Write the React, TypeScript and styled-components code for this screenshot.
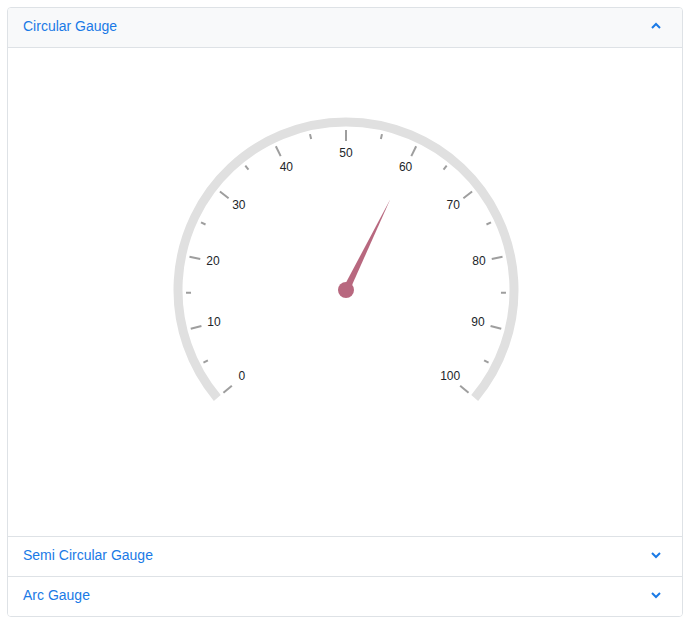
import React from 'react';
import styled, { createGlobalStyle } from 'styled-components';

const Global = createGlobalStyle`
  body { margin: 0; background: #fff; font-family: "Liberation Sans", Arial, sans-serif; }
`;

const Page = styled.div`
  padding: 7px 5px 0 7px;
`;

const Accordion = styled.div`
  border: 1px solid #dee2e6;
  border-radius: 4px;
  overflow: hidden;
`;

const Header = styled.div<{ $open?: boolean; $first?: boolean }>`
  height: 40px;
  display: flex;
  align-items: center;
  justify-content: space-between;
  padding: 0 20px 3px 15px;
  box-sizing: border-box;
  background: ${p => (p.$open ? '#f8f9fa' : '#fff')};
  border-top: ${p => (p.$first ? 'none' : '1px solid #dee2e6')};
  border-bottom: ${p => (p.$open ? '1px solid #dee2e6' : 'none')};
  color: #1a7ae6;
  font-size: 14px;
`;

const Body = styled.div`
  height: 488px;
  display: flex;
  justify-content: center;
  align-items: flex-start;
`;

const Chevron = ({ up }: { up?: boolean }) => (
  <svg width="12" height="12" viewBox="0 0 12 12">
    <path d={up ? 'M2 8 L6 4 L10 8' : 'M2 4 L6 8 L10 4'} fill="none" stroke="#1a7ae6" strokeWidth="2" />
  </svg>
);

const cx = 345 - 7, cy = 290 - 48;
const pt = (v: number, r: number) => {
  const a = ((-130 + 2.6 * v) * Math.PI) / 180;
  return [cx + r * Math.sin(a), cy - r * Math.cos(a)];
};

const Gauge = () => {
  const [sx, sy] = pt(0, 168);
  const [ex, ey] = pt(100, 168);
  const ticks = [];
  for (let v = 0; v <= 100; v += 5) {
    const major = v % 10 === 0;
    const [x1, y1] = pt(v, 160);
    const [x2, y2] = pt(v, major ? 149 : 155);
    ticks.push(<line key={v} x1={x1} y1={y1} x2={x2} y2={y2} stroke="#9e9e9e" strokeWidth="2" />);
    if (major) {
      const [lx, ly] = pt(v, 136);
      ticks.push(
        <text key={'l' + v} x={lx} y={ly + 3} textAnchor="middle" fontSize="12" fill="#212529"
          fontFamily="'Liberation Sans', Arial, sans-serif">{v}</text>
      );
    }
  }
  const a = ((-130 + 2.6 * 60) * Math.PI) / 180;
  const tip = [cx + 101 * Math.sin(a), cy - 101 * Math.cos(a)];
  const px = Math.cos(a) * 3.5, py = Math.sin(a) * 3.5;
  return (
    <svg width="676" height="488">
      <path d={`M${sx} ${sy} A168 168 0 1 1 ${ex} ${ey}`} fill="none" stroke="#e0e0e0" strokeWidth="9" />
      {ticks}
      <polygon points={`${cx - px},${cy - py} ${tip[0]},${tip[1]} ${cx + px},${cy + py}`} fill="#b8687f" />
      <circle cx={cx} cy={cy} r="8" fill="#b8687f" />
    </svg>
  );
};

export default function App() {
  return (
    <>
      <Global />
      <Page>
        <Accordion>
          <Header $open $first>Circular Gauge<Chevron up /></Header>
          <Body><Gauge /></Body>
          <Header>Semi Circular Gauge<Chevron /></Header>
          <Header>Arc Gauge<Chevron /></Header>
        </Accordion>
      </Page>
    </>
  );
}
